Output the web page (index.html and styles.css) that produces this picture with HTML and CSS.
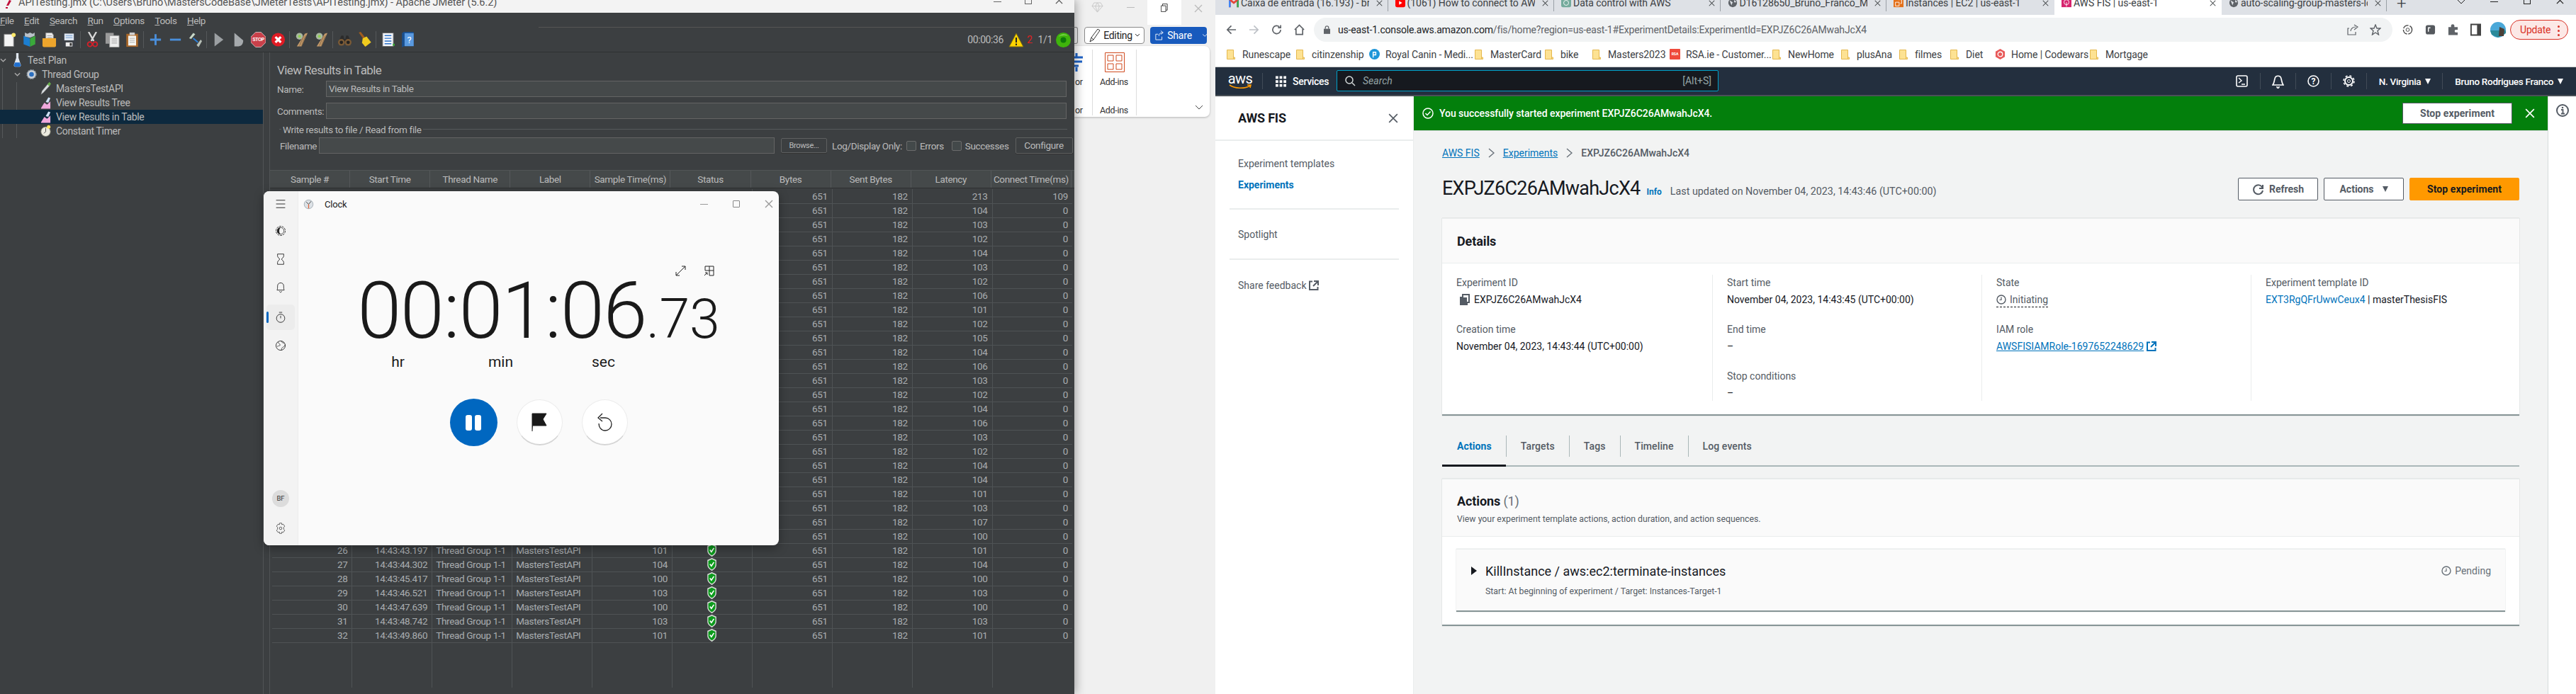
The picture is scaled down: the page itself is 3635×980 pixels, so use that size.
FILE: index.html
```html
<!DOCTYPE html>
<html lang="en">

<head>
    <meta charset="UTF-8">
    <title>Desktop</title>
    <link rel="stylesheet" href="styles.css">
</head>

<body>
    <svg class="sprite">
        <symbol id="shield" viewBox="0 0 14 20">
            <path d="M7 0 14 3V11C14 15 10 18 7 20 4 18 0 15 0 11V3Z" fill="#d8dcd8" />
            <path d="M7 2 12.500 4.500V11C12.500 14 9.500 16.500 7 18 4.500 16.500 1.500 14 1.500 11V4.500Z" fill="#0c9a1c" />
            <path d="M4 9.500 6.300 12.500 10.200 6.500" fill="none" stroke="#fff" stroke-width="1.800" />
        </symbol>
        <symbol id="folder" viewBox="0 0 12 14">
            <path d="M.5.500H9.500V13.500H.5Z" fill="#fde293" stroke="#e5b84f" />
            <path d="M9.500 11H11.500V13.500H9.500Z" fill="#fde293" stroke="#e5b84f" />
        </symbol>
        <symbol id="x" viewBox="0 0 12 12">
            <path d="M1 1 11 11M11 1 1 11" fill="none" stroke="currentColor" stroke-width="1.400" />
        </symbol>
        <symbol id="sweep" viewBox="0 0 22 22">
            <circle cx="8" cy="6" r="5" fill="#a9b8a0" />
            <circle cx="8" cy="6" r="2" fill="#8fd14f" />
            <path d="M20 1 11 21H4L16 2Z" fill="#c2996a" />
            <path d="M14 6 8 20M17 5 11 20" stroke="#8a6a45" />
        </symbol>
        <symbol id="ext" viewBox="0 0 14 14">
            <path d="M5 1.500H1V13H12.500V9M7 1H13V7M13 1 6 8" fill="none" stroke="currentColor" stroke-width="2" />
        </symbol>
        <symbol id="clockface" viewBox="0 0 14 14">
            <circle cx="7" cy="7" r="6" fill="none" stroke="currentColor" stroke-width="1.400" />
            <path d="M7 3.500V7.500H4.500" fill="none" stroke="currentColor" stroke-width="1.200" />
        </symbol>
    </svg>

    <!-- office window behind -->
    <div class="word">
        <div class="word-title">
            <svg class="w-gem" viewBox="0 0 18 16"><path d="M4 1H14L17 6 9 15 1 6ZM1 6H17M6 6 9 15 12 6 9 1 6 6" fill="none" stroke="#c8c8c8" /></svg>
            <span class="w-min"></span>
            <div class="w-restore"><svg viewBox="0 0 12 14" width="10" height="12"><path d="M.5 3.500H8.500V13.500H.5ZM3 3.500V.5H11V11H8.500" fill="none" stroke="#222" /></svg></div>
            <svg class="w-close" width="12" height="14"><use href="#x" /></svg>
        </div>
        <div class="word-btns">
            <span class="w-stub"></span>
            <div class="w-edit">
                <svg width="16" height="20" viewBox="0 0 16 20"><path d="M1 19 3 13 12 1 15 3 6 16ZM3 13 6 16" fill="none" stroke="#333" /></svg>
                Editing
                <svg width="6" height="4" viewBox="0 0 6 4"><path d="M0 0 3 3 6 0" fill="none" stroke="#333" /></svg>
            </div>
            <div class="w-share">
                <svg width="14" height="16" viewBox="0 0 14 16"><path d="M1 6H5M1 6V15H11V10M6 9C6 5 9 3.500 12 3.500M9 .5 13 3.500 9 6.500" fill="none" stroke="#fff" /></svg>
                <span class="w-share-txt">Share</span>
                <svg width="7" height="4" viewBox="0 0 7 4"><path d="M0 0 3.500 3.500 7 0" fill="none" stroke="#fff" /></svg>
            </div>
        </div>
        <div class="ribbon">
            <div class="r-stub">
                <svg width="12" height="26" viewBox="0 0 12 26"><path d="M0 6H12M0 12H11M0 18H6M3 0V5M3 20V26" stroke="#1d63c8" stroke-width="3" /></svg>
                <span class="r-label">or</span>
                <span class="r-label r-bottom">or</span>
            </div>
            <div class="r-addins">
                <svg width="28" height="28" viewBox="0 0 28 28">
                    <path d="M.5.5H27.500V27.500H.5Z" fill="#fff" stroke="#d04a1e" />
                    <path d="M4 4H12V12H4ZM16 4H24V12H16ZM4 16H12V24H4ZM16 16H24V24H16Z" fill="#fff" stroke="#d04a1e" />
                </svg>
                <span class="r-label">Add-ins</span>
                <span class="r-label r-bottom">Add-ins</span>
            </div>
            <svg class="r-chev" width="10" height="6" viewBox="0 0 10 6"><path d="M0 0 5 5 10 0" fill="none" stroke="#444" /></svg>
        </div>
    </div>

    <!-- jmeter -->
    <div class="jm">
        <div class="jm-title">
            <svg width="8" height="12" viewBox="0 0 8 12"><path d="M5 0 8 1 4 8H1ZM0 10H3V12H0Z" fill="#c0103a" /></svg>
            <span class="jm-title-txt">APITesting.jmx (C:\Users\Bruno\MastersCodeBase\JMeterTests\APITesting.jmx) - Apache JMeter (5.6.2)</span>
            <div class="jm-ctrl">
                <span class="jm-min"></span>
                <span class="jm-max"></span>
                <svg width="11" height="11"><use href="#x" /></svg>
            </div>
        </div>
        <div class="jm-menu">
            <span><u>F</u>ile</span>
            <span><u>E</u>dit</span>
            <span><u>S</u>earch</span>
            <span><u>R</u>un</span>
            <span><u>O</u>ptions</span>
            <span><u>T</u>ools</span>
            <span><u>H</u>elp</span>
            <div class="jm-menu-fill"></div>
        </div>
        <div class="jm-tools">
            <div class="ti"><svg viewBox="0 0 22 22"><path d="M3 3H17V21H3Z" fill="#f4f4f4" stroke="#888" /><circle cx="17" cy="4" r="3" fill="#ffe96a" /></svg></div>
            <div class="ti"><svg viewBox="0 0 22 24"><path d="M2 6 12 10V23L2 19Z" fill="#1c7ed0" /><path d="M12 10 20 6V19L12 23Z" fill="#3aa83a" /><path d="M4 7V1L8 3 12 1 16 3 19 1V6L12 9Z" fill="#b9c1c8" /></svg></div>
            <div class="ti"><svg viewBox="0 0 22 22"><path d="M6 1H15L17 4V12H6Z" fill="#eee" stroke="#999" /><path d="M8 5H15M8 8H15" stroke="#999" /><path d="M1 9H21V20C21 21 20 22 19 22H3C2 22 1 21 1 20Z" fill="#eda52c" /></svg></div>
            <div class="ti"><svg viewBox="0 0 22 22"><path d="M1 1H21V22H1Z" fill="#3b3f45" /><path d="M4 2H18V12H4Z" fill="#dfe7f2" /><path d="M6 5H16M6 8H16" stroke="#6d9ad0" /><path d="M6 15H16V21H6Z" fill="#eee" /><path d="M12 16H15V20H12Z" fill="#333" /></svg></div>
            <span class="tsep"></span>
            <div class="ti"><svg viewBox="0 0 22 24"><path d="M5 0 13 14M17 0 9 14" stroke="#d8d8d8" stroke-width="2.500" /><circle cx="7" cy="19" r="3.500" fill="none" stroke="#d4202a" stroke-width="2" /><circle cx="15" cy="19" r="3.500" fill="none" stroke="#d4202a" stroke-width="2" /></svg></div>
            <div class="ti"><svg viewBox="0 0 22 22"><path d="M1 1H13V17H1Z" fill="#9a9a9a" /><path d="M7 5H21V22H7Z" fill="#ececec" stroke="#999" /><path d="M10 10H18M10 13H18M10 16H18" stroke="#999" /></svg></div>
            <div class="ti"><svg viewBox="0 0 22 24"><path d="M2 3H20V23H2Z" fill="#a9682a" /><path d="M5 6H17V21H5Z" fill="#f4f4f0" /><path d="M7 1H15V5H7Z" fill="#cfcfcf" /><path d="M7 10H15M7 13H15M7 16H15" stroke="#aaa" /></svg></div>
            <span class="tsep"></span>
            <div class="ti"><svg viewBox="0 0 22 22"><path d="M11 3V19M3 11H19" stroke="#4a8fdc" stroke-width="3" /></svg></div>
            <div class="ti"><svg viewBox="0 0 22 22"><path d="M3 11H19" stroke="#4a8fdc" stroke-width="3" /></svg></div>
            <div class="ti"><svg viewBox="0 0 22 22"><path d="M2 9 8 1 11 3 5 10Z" fill="#c8d8c8" /><path d="M16 22 21 13 19 11 13 19Z" fill="#b8c0b8" /><path d="M8 9 15 15" stroke="#2a7fd8" stroke-width="2" /></svg></div>
            <span class="tsep"></span>
            <div class="ti"><svg viewBox="0 0 22 22"><path d="M5 1 18 11 5 21Z" fill="#9b9fa2" /></svg></div>
            <div class="ti"><svg viewBox="0 0 22 22"><path d="M5 1 18 12C18 18 15 21 9 21H5Z" fill="#a6aaad" /></svg></div>
            <div class="ti"><svg viewBox="0 0 22 22"><path d="M7 0H15L22 7V15L15 22H7L0 15V7Z" fill="#c9404a" stroke="#eee" stroke-width=".7" /><text x="11" y="13.500" text-anchor="middle" class="stop-word">STOP</text></svg></div>
            <div class="ti"><svg viewBox="0 0 22 22"><circle cx="11" cy="11" r="10" fill="#e01b24" /><path d="M7 7 15 15M15 7 7 15" stroke="#fff" stroke-width="3.500" /></svg></div>
            <span class="tsep"></span>
            <div class="ti"><svg viewBox="0 0 22 22"><use href="#sweep" /></svg></div>
            <div class="ti"><svg viewBox="0 0 22 22"><use href="#sweep" /></svg></div>
            <span class="tsep"></span>
            <div class="ti"><svg viewBox="0 0 22 22"><path d="M2 14 6 5H9L10 10H12L13 5H16L20 14Z" fill="#2b2b2b" /><circle cx="6" cy="15" r="5" fill="#7a5a36" /><circle cx="16" cy="15" r="5" fill="#7a5a36" /><circle cx="6" cy="15" r="2.500" fill="#222" /><circle cx="16" cy="15" r="2.500" fill="#222" /></svg></div>
            <div class="ti"><svg viewBox="0 0 22 24"><path d="M2 1 5 0 12 9 9 11Z" fill="#a15c1e" /><path d="M8 10 14 7 21 16 12 23 7 17Z" fill="#f0cb1e" /></svg></div>
            <span class="tsep"></span>
            <div class="ti"><svg viewBox="0 0 22 22"><path d="M3 1H19V21H3Z" fill="#f4f6fa" stroke="#666" /><path d="M6 5H16M6 9H16M6 13H16M6 17H16" stroke="#2a70c8" stroke-width="1.500" /><path d="M18 17H21V20H18Z" fill="#3aa83a" /></svg></div>
            <div class="ti"><svg viewBox="0 0 22 24"><path d="M2 2 5 0H20V22H5L2 24Z" fill="#1a4f8e" /><path d="M6 2H20V22H6Z" fill="#5a9ae0" /><text x="13" y="17" text-anchor="middle" class="help-word">?</text></svg></div>

            <div class="jm-status">
                <span class="st-time">00:00:36</span>
                <svg width="22" height="21" viewBox="0 0 22 21"><path d="M11 1 21 20H1Z" fill="#ffd400" stroke="#7a6a12" /><path d="M11 7V14M11 15.500V18" stroke="#222" stroke-width="2" /></svg>
                <span class="st-err">2</span>
                <span class="st-count">1/1</span>
                <svg class="st-ball" width="21" height="21" viewBox="0 0 21 21"><circle cx="10.500" cy="10.500" r="10.500" fill="#3fb40c" /><circle cx="10.500" cy="10.500" r="4" fill="#0e7a0a" /><path d="M4 6C6 2 14 1 17 5 13 3 8 3 4 6Z" fill="#a6e57a" /></svg>
            </div>
        </div>

        <div class="jm-body">
            <div class="tree">
                <span class="tree-line l1"></span>
                <span class="tree-line l2"></span>
                <div class="tn n0">
                    <svg class="tw" viewBox="0 0 10 6"><path d="M1 1 5 5 9 1" fill="none" stroke="#aaa" stroke-width="1.500" /></svg>
                    <svg class="ni" viewBox="0 0 14 24"><path d="M5 0H9V8L13 20C13 22 12 23 11 23H3C2 23 1 22 1 20L5 8Z" fill="#dfe6ee" /><path d="M3 16H11L13 21 11 23H3L1 21Z" fill="#1f6fd0" /></svg>
                    Test Plan
                </div>
                <div class="tn n1">
                    <svg class="tw" viewBox="0 0 10 6"><path d="M1 1 5 5 9 1" fill="none" stroke="#aaa" stroke-width="1.500" /></svg>
                    <svg class="ni" viewBox="0 0 18 18"><circle cx="9" cy="9" r="7.500" fill="#ccd2d8" stroke="#8f9aa5" stroke-width="2" stroke-dasharray="2.500 1.500" /><circle cx="9" cy="9" r="4" fill="#2b6fc0" /></svg>
                    Thread Group
                </div>
                <div class="tn n2">
                    <svg class="ni" viewBox="0 0 18 22"><path d="M1 21 3 15 13 3 16 6 5 18Z" fill="#d8dde0" stroke="#888" stroke-width=".5" /><path d="M12 4 15 0 18 3 15 7Z" fill="#6ab04c" /></svg>
                    MastersTestAPI
                </div>
                <div class="tn n2">
                    <svg class="ni" viewBox="0 0 16 20"><path d="M1 18 6 10 10 13 15 8V19H1Z" fill="#f0a8dc" /><path d="M8 9 12 2 15 3 12 10Z" fill="#cfe0f4" /></svg>
                    View Results Tree
                </div>
                <div class="tn n2 sel">
                    <svg class="ni" viewBox="0 0 16 20"><path d="M1 18 6 10 10 13 15 8V19H1Z" fill="#f0a8dc" /><path d="M8 9 12 2 15 3 12 10Z" fill="#cfe0f4" /></svg>
                    View Results in Table
                </div>
                <div class="tn n2">
                    <svg class="ni" viewBox="0 0 18 22"><circle cx="9" cy="12" r="8" fill="#ecebe0" stroke="#8a8a7a" /><path d="M9 6V12L6 15" fill="none" stroke="#333" /><circle cx="14" cy="4" r="3" fill="#ffe45c" /></svg>
                    Constant Timer
                </div>
            </div>
            <div class="results">
                <h1 class="res-title">View Results in Table</h1>
                <div class="frow">
                    <span class="flabel">Name:</span>
                    <div class="field">View Results in Table</div>
                </div>
                <div class="frow">
                    <span class="flabel">Comments:</span>
                    <div class="field"></div>
                </div>
                <div class="legend"><span>Write results to file / Read from file</span></div>
                <div class="frow file-row">
                    <span class="flabel">Filename</span>
                    <div class="field file"></div>
                    <div class="btn browse">Browse...</div>
                    <span class="log">Log/Display Only:</span>
                    <span class="cb"></span><span class="cb-txt">Errors</span>
                    <span class="cb"></span><span class="cb-txt">Successes</span>
                    <div class="btn configure">Configure</div>
                </div>
                <div class="thead">
                    <span>Sample #</span>
                    <span>Start Time</span>
                    <span>Thread Name</span>
                    <span>Label</span>
                    <span>Sample Time(ms)</span>
                    <span>Status</span>
                    <span>Bytes</span>
                    <span>Sent Bytes</span>
                    <span>Latency</span>
                    <span>Connect Time(ms)</span>
                </div>
                <table class="rows">
                    <colgroup>
                        <col><col><col><col><col><col><col><col><col><col>
                    </colgroup>
                    <tr><td colspan="6"></td><td>651</td><td>182</td><td>213</td><td>109</td></tr>
                    <tr><td colspan="6"></td><td>651</td><td>182</td><td>104</td><td>0</td></tr>
                    <tr><td colspan="6"></td><td>651</td><td>182</td><td>103</td><td>0</td></tr>
                    <tr><td colspan="6"></td><td>651</td><td>182</td><td>102</td><td>0</td></tr>
                    <tr><td colspan="6"></td><td>651</td><td>182</td><td>104</td><td>0</td></tr>
                    <tr><td colspan="6"></td><td>651</td><td>182</td><td>103</td><td>0</td></tr>
                    <tr><td colspan="6"></td><td>651</td><td>182</td><td>102</td><td>0</td></tr>
                    <tr><td colspan="6"></td><td>651</td><td>182</td><td>106</td><td>0</td></tr>
                    <tr><td colspan="6"></td><td>651</td><td>182</td><td>101</td><td>0</td></tr>
                    <tr><td colspan="6"></td><td>651</td><td>182</td><td>102</td><td>0</td></tr>
                    <tr><td colspan="6"></td><td>651</td><td>182</td><td>105</td><td>0</td></tr>
                    <tr><td colspan="6"></td><td>651</td><td>182</td><td>104</td><td>0</td></tr>
                    <tr><td colspan="6"></td><td>651</td><td>182</td><td>106</td><td>0</td></tr>
                    <tr><td colspan="6"></td><td>651</td><td>182</td><td>103</td><td>0</td></tr>
                    <tr><td colspan="6"></td><td>651</td><td>182</td><td>102</td><td>0</td></tr>
                    <tr><td colspan="6"></td><td>651</td><td>182</td><td>104</td><td>0</td></tr>
                    <tr><td colspan="6"></td><td>651</td><td>182</td><td>106</td><td>0</td></tr>
                    <tr><td colspan="6"></td><td>651</td><td>182</td><td>103</td><td>0</td></tr>
                    <tr><td colspan="6"></td><td>651</td><td>182</td><td>102</td><td>0</td></tr>
                    <tr><td colspan="6"></td><td>651</td><td>182</td><td>104</td><td>0</td></tr>
                    <tr><td colspan="6"></td><td>651</td><td>182</td><td>104</td><td>0</td></tr>
                    <tr><td colspan="6"></td><td>651</td><td>182</td><td>101</td><td>0</td></tr>
                    <tr><td colspan="6"></td><td>651</td><td>182</td><td>103</td><td>0</td></tr>
                    <tr><td colspan="6"></td><td>651</td><td>182</td><td>107</td><td>0</td></tr>
                    <tr><td colspan="6"></td><td>651</td><td>182</td><td>100</td><td>0</td></tr>
                    <tr><td>26</td><td>14:43:43.197</td><td class="tl">Thread Group 1-1</td><td class="tl">MastersTestAPI</td><td>101</td><td class="tc"><svg class="shield"><use href="#shield" /></svg></td><td>651</td><td>182</td><td>101</td><td>0</td></tr>
                    <tr><td>27</td><td>14:43:44.302</td><td class="tl">Thread Group 1-1</td><td class="tl">MastersTestAPI</td><td>104</td><td class="tc"><svg class="shield"><use href="#shield" /></svg></td><td>651</td><td>182</td><td>104</td><td>0</td></tr>
                    <tr><td>28</td><td>14:43:45.417</td><td class="tl">Thread Group 1-1</td><td class="tl">MastersTestAPI</td><td>100</td><td class="tc"><svg class="shield"><use href="#shield" /></svg></td><td>651</td><td>182</td><td>100</td><td>0</td></tr>
                    <tr><td>29</td><td>14:43:46.521</td><td class="tl">Thread Group 1-1</td><td class="tl">MastersTestAPI</td><td>103</td><td class="tc"><svg class="shield"><use href="#shield" /></svg></td><td>651</td><td>182</td><td>103</td><td>0</td></tr>
                    <tr><td>30</td><td>14:43:47.639</td><td class="tl">Thread Group 1-1</td><td class="tl">MastersTestAPI</td><td>100</td><td class="tc"><svg class="shield"><use href="#shield" /></svg></td><td>651</td><td>182</td><td>100</td><td>0</td></tr>
                    <tr><td>31</td><td>14:43:48.742</td><td class="tl">Thread Group 1-1</td><td class="tl">MastersTestAPI</td><td>103</td><td class="tc"><svg class="shield"><use href="#shield" /></svg></td><td>651</td><td>182</td><td>103</td><td>0</td></tr>
                    <tr><td>32</td><td>14:43:49.860</td><td class="tl">Thread Group 1-1</td><td class="tl">MastersTestAPI</td><td>101</td><td class="tc"><svg class="shield"><use href="#shield" /></svg></td><td>651</td><td>182</td><td>101</td><td>0</td></tr>
                    <tr class="filler"><td></td><td></td><td></td><td></td><td></td><td></td><td></td><td></td><td></td><td></td></tr>
                </table>
            </div>
        </div>
    </div>

    <!-- clock app -->
    <div class="clock">
        <div class="c-side">
            <svg class="ci" viewBox="0 0 20 16"><path d="M2 1.500H18M2 8H18M2 14.500H18" stroke="#333" stroke-width="1.300" /></svg>
            <svg class="ci c1" viewBox="0 0 20 22"><circle cx="10" cy="11" r="9" fill="none" stroke="#222" stroke-width="1.200" stroke-dasharray="4 1.500" /><path d="M10 4A7 7 0 0 0 10 18 10 10 0 0 1 10 4Z" fill="#222" /><circle cx="10" cy="11" r="6.500" fill="none" stroke="#222" /></svg>
            <svg class="ci c2" viewBox="0 0 20 22"><path d="M4 1H16V5C16 8 12 9 12 11 12 13 16 14 16 17V21H4V17C4 14 8 13 8 11 8 9 4 8 4 5Z" fill="none" stroke="#222" stroke-width="1.200" /></svg>
            <svg class="ci c3" viewBox="0 0 20 22"><path d="M3 16C4 14 4 12 4 8 4 4 7 2 10 2 13 2 16 4 16 8 16 12 16 14 17 16ZM8 18C8 21 12 21 12 18" fill="none" stroke="#222" stroke-width="1.200" /></svg>
            <div class="c-active">
                <span class="c-bar"></span>
                <svg class="ci" viewBox="0 0 20 22"><circle cx="10" cy="13" r="8" fill="none" stroke="#222" stroke-width="1.200" /><path d="M7 1.500H13M10 8V13" stroke="#222" stroke-width="1.200" /></svg>
            </div>
            <svg class="ci c5" viewBox="0 0 20 22"><circle cx="10" cy="11" r="9" fill="none" stroke="#222" stroke-width="1.200" /><path d="M5 4C6 8 9 7 9 10 9 12 5 11 3 13M12 20C11 16 13 15 15 14 17 13 18 11 18.500 9M12 2.500C12 5 14 6 17 6" fill="none" stroke="#222" /></svg>
            <div class="c-spacer"></div>
            <div class="c-avatar">BF</div>
            <svg class="ci c-gear" viewBox="0 0 20 22"><path d="M8 1H12L12.500 4 15 3 18 7 16 9V13L18 15 15 19 12.500 18 12 21H8L7.500 18 5 19 2 15 4 13V9L2 7 5 3 7.500 4Z" fill="none" stroke="#333" /><circle cx="10" cy="11" r="2.500" fill="none" stroke="#333" /></svg>
        </div>
        <div class="c-main">
            <div class="c-title">
                <svg class="c-appicon" viewBox="0 0 16 18"><circle cx="8" cy="9" r="7.500" fill="#dde2e6" stroke="#9aa5ad" /><path d="M8 9 4 5M8 9 12 4" stroke="#333" /><path d="M8 9V16" stroke="#e0633a" stroke-width="1.500" /></svg>
                <span class="c-name">Clock</span>
                <div class="c-ctrl">
                    <span class="c-min"></span>
                    <span class="c-max"></span>
                    <svg width="12" height="12" class="c-x"><use href="#x" /></svg>
                </div>
            </div>
            <div class="c-tools">
                <svg width="15" height="15" viewBox="0 0 15 15"><path d="M1 9V14H6M9 1H14V6M14 1 1 14" fill="none" stroke="#222" /></svg>
                <svg width="15" height="15" viewBox="0 0 15 15"><path d="M2 1H14V14H8V7H2ZM8 1V7H14M1 14 5 10M2 10H5V13" fill="none" stroke="#222" /></svg>
            </div>
            <div class="c-time">00:01:06<span class="c-frac">.73</span></div>
            <div class="c-units"><span>hr</span><span>min</span><span>sec</span></div>
            <div class="c-btns">
                <div class="c-pause"><span></span><span></span></div>
                <div class="c-round">
                    <svg width="22" height="26" viewBox="0 0 22 26"><path d="M1 26V1H21L16 9 21 18H2" fill="#1a1a1a" stroke="#1a1a1a" /></svg>
                </div>
                <div class="c-round">
                    <svg width="24" height="26" viewBox="0 0 24 26"><path d="M6 7H13C18 7 22 11 22 16 22 21 18 25 13 25 7 25 4 20 4 15M9 1 3 7 9 12" fill="none" stroke="#222" stroke-width="1.300" /></svg>
                </div>
            </div>
        </div>
    </div>

    <!-- browser -->
    <div class="chrome">
        <div class="tabs">
            <div class="tab">
                <svg class="fav" viewBox="0 0 16 14"><path d="M0 2 2 0 8 5 14 0 16 2V14H13V5L8 9 3 5V14H0Z" fill="#e6463a" /><path d="M13 14V5L16 2V14Z" fill="#34a853" /><path d="M0 14V2L3 5V14Z" fill="#4285f4" /></svg>
                <span class="tab-t">Caixa de entrada (16.193) - bruno</span>
                <svg class="tab-x"><use href="#x" /></svg>
            </div>
            <div class="tab">
                <svg class="fav" viewBox="0 0 16 14"><rect width="16" height="14" rx="3" fill="#f00" /><path d="M6 4 11 7 6 10Z" fill="#fff" /></svg>
                <span class="tab-t">(1061) How to connect to AWS RDS</span>
                <svg class="tab-x"><use href="#x" /></svg>
            </div>
            <div class="tab">
                <svg class="fav" viewBox="0 0 16 14"><rect width="16" height="14" rx="3" fill="#74aa9c" /><circle cx="8" cy="7" r="4" fill="none" stroke="#fff" /></svg>
                <span class="tab-t">Data control with AWS</span>
                <svg class="tab-x"><use href="#x" /></svg>
            </div>
            <div class="tab">
                <svg class="fav" viewBox="0 0 16 14"><circle cx="8" cy="7" r="7" fill="#5f6368" /><path d="M3 3 8 6 6 11ZM11 2 14 6 10 6Z" fill="#dee1e6" /></svg>
                <span class="tab-t">D16128650_Bruno_Franco_MSc_Thesis</span>
                <svg class="tab-x"><use href="#x" /></svg>
            </div>
            <div class="tab tab-last">
                <svg class="fav" viewBox="0 0 16 14"><rect width="16" height="14" fill="#e4701a" /><path d="M3 6H9V12H3ZM7 2H13V8H11" fill="none" stroke="#fff" /></svg>
                <span class="tab-t">Instances | EC2 | us-east-1</span>
                <svg class="tab-x"><use href="#x" /></svg>
            </div>
            <div class="tab tab-on">
                <svg class="fav" viewBox="0 0 16 14"><rect width="16" height="14" fill="#d6246e" /><circle cx="8" cy="6" r="4" fill="none" stroke="#fff" /><path d="M8 6V13" stroke="#fff" /></svg>
                <span class="tab-t">AWS FIS | us-east-1</span>
                <svg class="tab-x"><use href="#x" /></svg>
            </div>
            <div class="tab tab-after">
                <svg class="fav" viewBox="0 0 16 14"><circle cx="8" cy="7" r="7" fill="#5f6368" /><path d="M3 3 8 6 6 11ZM11 2 14 6 10 6Z" fill="#dee1e6" /></svg>
                <span class="tab-t">auto-scaling-group-masters-load</span>
                <svg class="tab-x"><use href="#x" /></svg>
            </div>
            <span class="tab-plus">+</span>
            <div class="win-ctrl">
                <svg width="10" height="6" viewBox="0 0 10 6"><path d="M0 0 5 5 10 0" fill="none" stroke="#222" /></svg>
                <span class="win-min"></span>
                <span class="win-max"></span>
                <svg width="11" height="11" class="win-x"><use href="#x" /></svg>
            </div>
        </div>
        <div class="toolbar">
            <svg class="nav-i" viewBox="0 0 16 16"><path d="M15 8H2M8 2 2 8 8 14" fill="none" stroke="#5f6368" stroke-width="1.800" /></svg>
            <svg class="nav-i" viewBox="0 0 16 16"><path d="M1 8H14M8 2 14 8 8 14" fill="none" stroke="#bdc1c6" stroke-width="1.800" /></svg>
            <svg class="nav-i" viewBox="0 0 16 16"><path d="M14 8A6 6 0 1 1 12 3.500M14 1V5H10" fill="none" stroke="#5f6368" stroke-width="1.800" /></svg>
            <svg class="nav-i" viewBox="0 0 16 16"><path d="M1 8 8 1 15 8M3 7V15H13V7" fill="none" stroke="#5f6368" stroke-width="1.800" /></svg>
            <div class="omni">
                <svg class="lock" viewBox="0 0 10 13"><path d="M0 5H10V13H0Z" fill="#5f6368" /><path d="M2.500 5V3C2.500 0 7.500 0 7.500 3V5" fill="none" stroke="#5f6368" stroke-width="1.400" /></svg>
                <span class="url"><b>us-east-1.console.aws.amazon.com</b>/fis/home?region=us-east-1#ExperimentDetails:ExperimentId=EXPJZ6C26AMwahJcX4</span>
                <svg class="om-i" viewBox="0 0 16 16"><path d="M3 6H1V15H12V11M5 10C5 6 9 4 12 4M10 1 15 4 10 8" fill="none" stroke="#5f6368" stroke-width="1.200" /></svg>
                <svg class="om-i" viewBox="0 0 16 16"><path d="M8 1 10 6H15L11 9.500 12.500 15 8 12 3.500 15 5 9.500 1 6H6Z" fill="none" stroke="#5f6368" stroke-width="1.400" /></svg>
            </div>
            <svg class="ext-i" viewBox="0 0 16 18"><circle cx="8" cy="9" r="6.500" fill="none" stroke="#444" stroke-width="1.500" stroke-dasharray="9 2" /><circle cx="8" cy="9" r="2.500" fill="none" stroke="#444" /></svg>
            <svg class="ext-i" viewBox="0 0 16 18"><rect x="1" y="2" width="14" height="14" rx="3" fill="#55595e" /><path d="M5 12V6H8" fill="none" stroke="#fff" stroke-width="1.500" /></svg>
            <svg class="ext-i" viewBox="0 0 16 18"><path d="M1 5H5V3C5 0 10 0 10 3V5H15V9H12C10 9 10 13 12 13H15V17H1Z" fill="#5f6368" /></svg>
            <svg class="ext-i" viewBox="0 0 16 18"><path d="M1 1H15V17H1Z" fill="none" stroke="#444" stroke-width="2" /><path d="M10 1H15V17H10Z" fill="#444" /></svg>
            <svg class="avatar" viewBox="0 0 22 22"><circle cx="11" cy="11" r="11" fill="#4aa8d8" /><path d="M0 12H22V16L11 22 2 18Z" fill="#2a8a9a" /><path d="M13 7 20 10 19 20 12 20Z" fill="#4a4038" /></svg>
            <div class="update">Update<span class="dots"><i></i><i></i><i></i></span></div>
        </div>
        <div class="marks">
            <span class="bm b1"><svg class="fd"><use href="#folder" /></svg>Runescape</span>
            <span class="bm b2"><svg class="fd"><use href="#folder" /></svg>citinzenship</span>
            <span class="bm b3"><svg class="bmi" viewBox="0 0 16 16"><circle cx="8" cy="8" r="8" fill="#1f96d8" /><path d="M6 13V5H10V9H6" fill="none" stroke="#fff" stroke-width="1.500" /></svg>Royal Canin - Medi...</span>
            <span class="bm b4"><svg class="fd"><use href="#folder" /></svg>MasterCard</span>
            <span class="bm b5"><svg class="fd"><use href="#folder" /></svg>bike</span>
            <span class="bm b6"><svg class="fd"><use href="#folder" /></svg>Masters2023</span>
            <span class="bm b7"><svg class="bmi" viewBox="0 0 16 16"><rect width="16" height="16" rx="1" fill="#ef4a3c" /><text x="8" y="10" text-anchor="middle" class="rsa-word">RSA</text></svg>RSA.ie - Customer...</span>
            <span class="bm b8"><svg class="fd"><use href="#folder" /></svg>NewHome</span>
            <span class="bm b9"><svg class="fd"><use href="#folder" /></svg>plusAna</span>
            <span class="bm b10"><svg class="fd"><use href="#folder" /></svg>filmes</span>
            <span class="bm b11"><svg class="fd"><use href="#folder" /></svg>Diet</span>
            <span class="bm b12"><svg class="bmi" viewBox="0 0 16 16"><path d="M8 0 15 4V12L8 16 1 12V4Z" fill="#e85a5a" /><circle cx="8" cy="8" r="3.500" fill="none" stroke="#fff" stroke-width="1.400" /></svg>Home | Codewars</span>
            <span class="bm b13"><svg class="fd"><use href="#folder" /></svg>Mortgage</span>
        </div>

        <div class="awsnav">
            <div class="aws-logo">aws<svg width="32" height="7" viewBox="0 0 32 7"><path d="M1 1C8 6 22 7 30 2M26 1 31 1 30 5" fill="none" stroke="#ff9900" stroke-width="1.600" /></svg></div>
            <span class="an-sep"></span>
            <svg class="grid9" viewBox="0 0 16 16"><path d="M0 0H4V4H0ZM6 0H10V4H6ZM12 0H16V4H12ZM0 6H4V10H0ZM6 6H10V10H6ZM12 6H16V10H12ZM0 12H4V16H0ZM6 12H10V16H6ZM12 12H16V16H12Z" fill="#fff" /></svg>
            <span class="services">Services</span>
            <div class="searchbox">
                <svg width="15" height="15" viewBox="0 0 15 15"><circle cx="6" cy="6" r="5" fill="none" stroke="#d5dbdb" stroke-width="1.500" /><path d="M10 10 14 14" stroke="#d5dbdb" stroke-width="1.500" /></svg>
                <span class="search-ph">Search</span>
                <span class="search-key">[Alt+S]</span>
            </div>
            <div class="an-right">
                <span class="an-item">
                    <svg width="17" height="17" viewBox="0 0 17 17"><rect x="1" y="1" width="15" height="15" rx="2" fill="none" stroke="#fff" stroke-width="1.600" /><path d="M4 4 8 8 4 11M8 13H13" fill="none" stroke="#fff" stroke-width="1.400" /></svg>
                </span>
                <span class="an-item">
                    <svg width="17" height="20" viewBox="0 0 17 20"><path d="M1 15C3 13 3 10 4 6 5 1 12 1 13 6 14 10 14 13 16 15ZM7 17C7 20 10 20 10 17" fill="none" stroke="#fff" stroke-width="1.700" /></svg>
                </span>
                <span class="an-item">
                    <svg width="17" height="17" viewBox="0 0 17 17"><circle cx="8.500" cy="8.500" r="7.500" fill="none" stroke="#fff" stroke-width="1.600" /><text x="8.500" y="12.500" text-anchor="middle" class="q-word">?</text></svg>
                </span>
                <span class="an-item">
                    <svg width="17" height="17" viewBox="0 0 17 17"><circle cx="8.500" cy="8.500" r="5.500" fill="none" stroke="#fff" stroke-width="2" /><circle cx="8.500" cy="8.500" r="7.500" fill="none" stroke="#fff" stroke-width="1.500" stroke-dasharray="3 3" /><circle cx="8.500" cy="8.500" r="2" fill="none" stroke="#fff" /></svg>
                </span>
                <span class="an-item an-txt">N. Virginia<i class="caret"></i></span>
                <span class="an-item an-txt">Bruno Rodrigues Franco<i class="caret"></i></span>
            </div>
        </div>

        <div class="console">
            <div class="side">
                <div class="side-head">
                    <span class="side-title">AWS FIS</span>
                    <svg width="14" height="14" class="side-x"><use href="#x" /></svg>
                </div>
                <div class="side-sec s-a">
                    <a class="side-link">Experiment templates</a>
                    <a class="side-link on">Experiments</a>
                </div>
                <div class="side-sec s-b"><a class="side-link">Spotlight</a></div>
                <div class="side-sec s-c"><a class="side-link">Share feedback <svg width="14" height="14" class="ico"><use href="#ext" /></svg></a></div>
            </div>

            <div class="main">
                <div class="flash">
                    <svg width="16" height="16" viewBox="0 0 16 16"><circle cx="8" cy="8" r="7" fill="none" stroke="#fff" stroke-width="1.500" /><path d="M4.500 8 7 10.500 11.500 5.500" fill="none" stroke="#fff" stroke-width="1.500" /></svg>
                    <span class="flash-txt">You successfully started experiment EXPJZ6C26AMwahJcX4.</span>
                    <div class="flash-btn">Stop experiment</div>
                    <svg width="14" height="14" class="flash-x"><use href="#x" /></svg>
                </div>
                <div class="content">
                    <div class="crumbs">
                        <a>AWS FIS</a>
                        <svg width="9" height="14" viewBox="0 0 9 14"><path d="M1 1 8 7 1 13" fill="none" stroke="#687078" stroke-width="1.400" /></svg>
                        <a>Experiments</a>
                        <svg width="9" height="14" viewBox="0 0 9 14"><path d="M1 1 8 7 1 13" fill="none" stroke="#687078" stroke-width="1.400" /></svg>
                        <span>EXPJZ6C26AMwahJcX4</span>
                    </div>
                    <div class="pagehead">
                        <h1>EXPJZ6C26AMwahJcX4</h1>
                        <span class="info">Info</span>
                        <span class="updated">Last updated on November 04, 2023, 14:43:46 (UTC+00:00)</span>
                        <div class="acts">
                            <div class="abtn refresh">
                                <svg width="18" height="18" viewBox="0 0 18 18"><path d="M15 3V8H10M14.500 7A6.500 6.500 0 1 0 15 11" fill="none" stroke="#545b64" stroke-width="2" /></svg>
                                Refresh
                            </div>
                            <div class="abtn actions">Actions<i class="caret dark"></i></div>
                            <div class="abtn stop">Stop experiment</div>
                        </div>
                    </div>

                    <div class="card details">
                        <div class="card-head"><h2>Details</h2></div>
                        <div class="dgrid">
                            <div class="dcol">
                                <div class="dt">Experiment ID</div>
                                <div class="dd"><svg class="copy" viewBox="0 0 14 16"><path d="M4 1H13V12H10V15H1V5H4Z" fill="none" stroke="#545b64" stroke-width="2" /><path d="M1 5H10V15H1Z" fill="#545b64" /></svg>EXPJZ6C26AMwahJcX4</div>
                                <div class="dt">Creation time</div>
                                <div class="dd">November 04, 2023, 14:43:44 (UTC+00:00)</div>
                            </div>
                            <div class="dcol">
                                <div class="dt">Start time</div>
                                <div class="dd">November 04, 2023, 14:43:45 (UTC+00:00)</div>
                                <div class="dt">End time</div>
                                <div class="dd">–</div>
                                <div class="dt">Stop conditions</div>
                                <div class="dd">–</div>
                            </div>
                            <div class="dcol">
                                <div class="dt">State</div>
                                <div class="dd"><span class="state"><svg width="14" height="14" class="ico"><use href="#clockface" /></svg>Initiating</span></div>
                                <div class="dt">IAM role</div>
                                <div class="dd"><a class="lnk">AWSFISIAMRole-1697652248629</a> <svg width="14" height="14" class="ico blue"><use href="#ext" /></svg></div>
                            </div>
                            <div class="dcol">
                                <div class="dt">Experiment template ID</div>
                                <div class="dd"><span class="blue">EXT3RgQFrUwwCeux4</span> | masterThesisFIS</div>
                            </div>
                        </div>
                    </div>

                    <div class="ctabs">
                        <span class="ctab on">Actions</span>
                        <span class="ctab">Targets</span>
                        <span class="ctab">Tags</span>
                        <span class="ctab">Timeline</span>
                        <span class="ctab">Log events</span>
                    </div>

                    <div class="card acard">
                        <div class="card-head ahead">
                            <h2>Actions <span class="cnt">(1)</span></h2>
                            <p>View your experiment template actions, action duration, and action sequences.</p>
                        </div>
                        <div class="abody">
                            <div class="item">
                                <div class="item-top">
                                    <svg width="8" height="12" viewBox="0 0 8 12"><path d="M0 0 8 6 0 12Z" fill="#16191f" /></svg>
                                    <span class="item-name">KillInstance / aws:ec2:terminate-instances</span>
                                    <span class="pending"><svg width="14" height="14" class="ico"><use href="#clockface" /></svg>Pending</span>
                                </div>
                                <div class="item-sub">Start: At beginning of experiment / Target: Instances-Target-1</div>
                            </div>
                        </div>
                    </div>
                </div>
            </div>

            <div class="rail">
                <svg width="20" height="20" viewBox="0 0 20 20"><circle cx="10" cy="10" r="8" fill="none" stroke="#545b64" stroke-width="2" /><circle cx="10" cy="6" r="1.300" fill="#545b64" /><path d="M8 9H10.500V14M8 14.500H13" fill="none" stroke="#545b64" stroke-width="1.800" /></svg>
            </div>
        </div>
    </div>
</body>

</html>
```

FILE: styles.css
```css
* {
    margin: 0;
    padding: 0;
    box-sizing: border-box;
}

html,
body {
    width: 3635px;
    height: 980px;
    overflow: hidden;
}

body {
    position: relative;
    background: #f0f0f0;
    font-family: Roboto, "Liberation Sans", sans-serif;
}

.sprite {
    display: none;
}

/* ---------- word ---------- */
.word {
    position: absolute;
    left: 1516px;
    top: 0;
    width: 199px;
    height: 980px;
    background: #f0f0f0;
    overflow: hidden;
}

.word-title {
    height: 35px;
    position: relative;
    color: #bbb;
}

.w-gem {
    position: absolute;
    left: 24px;
    top: 3px;
    width: 17px;
    height: 15px;
}

.w-min {
    position: absolute;
    left: 74px;
    top: 10px;
    width: 11px;
    height: 1px;
    background: #bbb;
}

.w-restore {
    position: absolute;
    left: 103px;
    top: 0;
    width: 48px;
    height: 35px;
    background: #fff;
    display: flex;
    align-items: flex-start;
    justify-content: center;
    padding-top: 5px;
}

.w-close {
    position: absolute;
    left: 169px;
    top: 5px;
}

.word-btns {
    display: flex;
    height: 30px;
    padding-top: 3px;
}

.w-stub {
    width: 5px;
    height: 24px;
    border: 1px solid #888;
    border-left: 0;
    border-radius: 0 3px 3px 0;
    margin-right: 9px;
}

.w-edit {
    width: 85px;
    height: 24px;
    border: 1px solid #8a8a8a;
    border-radius: 4px;
    background: #fff;
    display: flex;
    align-items: center;
    justify-content: center;
    gap: 4px;
    font-size: 14px;
    letter-spacing: -.3px;
    color: #222;
}

.w-share {
    width: 80px;
    height: 24px;
    margin-left: 8px;
    border-radius: 4px;
    background: #185abd;
    color: #fff;
    display: flex;
    align-items: center;
    gap: 5px;
    padding-left: 7px;
    font-size: 14px;
    letter-spacing: -.2px;
}

.w-share-txt {
    margin-right: 10px;
}

.ribbon {
    position: relative;
    width: 191px;
    height: 100px;
    background: #fff;
    border-radius: 0 7px 7px 0;
    box-shadow: 0 1px 3px rgba(0, 0, 0, .25);
}

.r-label {
    position: absolute;
    top: 42px;
    font-size: 12.5px;
    letter-spacing: -.3px;
    color: #333;
}

.r-bottom {
    top: 82px;
}

.r-stub {
    position: absolute;
    left: 0;
    top: 0;
    width: 26px;
    height: 93px;
    border-right: 1px solid #ddd;
    margin-top: 5px;
}

.r-stub svg {
    margin-top: 5px;
}

.r-stub .r-label {
    left: 1px;
    top: 38px;
}

.r-stub .r-bottom {
    top: 78px;
}

.r-addins {
    position: absolute;
    left: 26px;
    top: 5px;
    width: 62px;
    height: 93px;
    border-right: 1px solid #ddd;
    text-align: center;
}

.r-addins svg {
    margin-top: 4px;
}

.r-addins .r-label {
    left: 10px;
    top: 38px;
}

.r-addins .r-bottom {
    top: 78px;
}

.r-chev {
    position: absolute;
    left: 171px;
    top: 84px;
}

/* ---------- jmeter ---------- */
.jm {
    position: absolute;
    left: 0;
    top: 0;
    width: 1516px;
    height: 980px;
    background: #3c3f41;
    color: #bbb;
    font-size: 13px;
    letter-spacing: -.35px;
    box-shadow: 3px 0 12px rgba(0, 0, 0, .3);
    overflow: hidden;
}

.jm-title {
    height: 18px;
    background: #f3f3f3;
    color: #555;
    display: flex;
    align-items: flex-start;
    padding-left: 8px;
    font-size: 14px;
    letter-spacing: 0;
}

.jm-title-txt {
    margin-left: 10px;
    margin-top: -6px;
    font-size: 14.500px;
    line-height: 20px;
    letter-spacing: -.05px;
}

.jm-ctrl {
    margin-left: auto;
    width: 114px;
    display: flex;
    gap: 33px;
    color: #555;
}

.jm-min {
    width: 11px;
    height: 1px;
    background: #666;
    margin-top: 2px;
}

.jm-max {
    width: 10px;
    height: 6px;
    border: 1px solid #666;
    border-top: 0;
}

.jm-ctrl svg {
    margin-top: -5px;
}

.jm-menu {
    height: 21px;
    display: flex;
    align-items: center;
    font-size: 13.500px;
    letter-spacing: -.4px;
    position: relative;
}

.jm-menu span {
    margin-right: 14.500px;
}

.jm-menu-fill {
    position: absolute;
    left: 760px;
    right: 0;
    bottom: 0;
    height: 1px;
    background: #555;
}

.jm-tools {
    height: 35px;
    display: flex;
    align-items: center;
    border-bottom: 1px solid #2f3132;
    margin-left: -1px;
}

.ti {
    width: 28px;
    height: 24px;
    display: flex;
    align-items: center;
    justify-content: center;
    flex: none;
}

.ti svg {
    width: 21px;
    height: 22px;
}

.tsep {
    width: 1px;
    height: 24px;
    margin: 0 2px;
    background: #55585a;
    flex: none;
}

.stop-word {
    font-size: 7px;
    font-weight: 700;
    fill: #fff;
    font-family: "Liberation Sans", sans-serif;
}

.help-word {
    font-size: 14px;
    fill: #fff;
}

.jm-status {
    margin-left: auto;
    display: flex;
    align-items: center;
    padding-right: 5px;
    font-size: 14px;
}

.st-time {
    margin-right: 7px;
    letter-spacing: -.4px;
}

.st-err {
    color: #e02020;
    margin: 0 8px 0 4px;
}

.st-count {
    margin-right: 5px;
}

.jm-body {
    display: flex;
    height: 906px;
}

.tree {
    width: 372px;
    position: relative;
    padding-top: 1px;
    font-size: 14px;
    border-right: 1px solid #505355;
    flex: none;
}

.tree-line {
    position: absolute;
    top: 22px;
    bottom: 785px;
    width: 1px;
    background: #55585a;
}

.l1 {
    left: 3px;
}

.l2 {
    left: 23px;
    top: 42px;
}

.tn {
    height: 20px;
    display: flex;
    align-items: center;
    position: relative;
}

.tw {
    width: 9px;
    height: 6px;
    margin-right: 8px;
}

.ni {
    width: 15px;
    height: 20px;
    margin-right: 7px;
    flex: none;
}

.n1 {
    padding-left: 20px;
}

.n2 {
    padding-left: 57px;
}

.sel {
    background: #0d293e;
}

.results {
    flex: 1;
    margin-left: 8px;
    padding-top: 11px;
    border-left: 1px solid #505355;
    min-width: 0;
}

.res-title {
    font-size: 17px;
    font-weight: 400;
    letter-spacing: -.6px;
    line-height: 28px;
    padding-left: 10px;
    height: 29px;
}

.frow {
    display: flex;
    align-items: center;
    height: 23px;
    margin-bottom: 8px;
    padding-left: 10px;
    font-size: 13.500px;
}

.flabel {
    width: 69px;
    flex: none;
}

.field {
    width: 1045px;
    height: 23px;
    border: 1px solid #646464;
    background: #45494a;
    padding-left: 3px;
    line-height: 21px;
}

.legend {
    height: 17px;
    margin: -1px 10px 2px 13px;
    position: relative;
    line-height: 16px;
    font-size: 13.500px;
}

.legend:before {
    content: "";
    position: absolute;
    left: 0;
    right: 0;
    top: 7px;
    height: 1px;
    background: #565a5c;
}

.legend span {
    position: relative;
    background: #3c3f41;
    padding: 0 2px;
    margin-left: 3px;
}

.file-row {
    padding-left: 14px;
    margin-bottom: 23px;
    font-size: 13.500px;
}

.file-row .flabel {
    width: 55px;
}

.file {
    width: 643px;
}

.btn {
    border: 1px solid #5e6060;
    border-radius: 2px;
    text-align: center;
    background: #3c3f41;
    box-shadow: 0 1px 0 #333;
}

.browse {
    width: 65px;
    height: 21px;
    line-height: 19px;
    font-size: 11px;
    margin-left: 9px;
}

.log {
    margin-left: 7px;
    width: 105px;
}

.cb {
    width: 14px;
    height: 14px;
    border: 1px solid #6b6b6b;
    border-radius: 2px;
    background: #43494a;
}

.cb-txt {
    margin-left: 5px;
}

.cb + .cb-txt {
    margin-right: 11px;
}

.configure {
    width: 81px;
    height: 23px;
    line-height: 21px;
    margin-left: -2px;
}

.thead {
    display: grid;
    grid-template-columns: repeat(10, 113.100px);
    height: 26px;
    background: #45494a;
    border-top: 1px solid #525557;
    border-bottom: 1px solid #2e3031;
    line-height: 24px;
    text-align: center;
    font-size: 13.500px;
}

.thead span {
    border-right: 1px solid #55585a;
    white-space: nowrap;
}

.rows {
    margin: 1px 0 0 3px;
    border-collapse: collapse;
    table-layout: fixed;
    width: 1129px;
    font-size: 13.500px;
    color: #a9adb0;
}

.rows col {
    width: 112.900px;
}

.rows td {
    height: 20px;
    padding: 0 6px;
    text-align: right;
    border-bottom: 1px solid #4f5355;
    border-right: 1px solid #4f5355;
    white-space: nowrap;
    overflow: hidden;
}

.rows td:last-child {
    border-right: 0;
}

.rows .tl {
    text-align: left;
    padding-left: 5px;
}

.rows .tc {
    text-align: center;
}

.shield {
    width: 13px;
    height: 18px;
    vertical-align: middle;
    display: inline-block;
}

.rows .filler td {
    height: 64px;
    border-bottom: 0;
}

/* ---------- clock ---------- */
.clock {
    position: absolute;
    left: 372px;
    top: 270px;
    width: 727px;
    height: 500px;
    background: #fafafa;
    border-radius: 8px;
    display: flex;
    box-shadow: 0 4px 14px rgba(0, 0, 0, .35);
    color: #1a1a1a;
}

.c-side {
    width: 49px;
    background: #f3f3f3;
    border-right: 1px solid #ececec;
    border-radius: 8px 0 0 8px;
    display: flex;
    flex-direction: column;
    align-items: center;
    padding-top: 10px;
    flex: none;
}

.ci {
    width: 16px;
    height: 16px;
    flex: none;
}

.c1 {
    margin-top: 22px;
}

.c2 {
    margin-top: 24px;
}

.c3 {
    margin-top: 24px;
}

.c-active {
    width: 40px;
    height: 36px;
    margin-top: 16px;
    background: #ececec;
    border-radius: 5px;
    position: relative;
    display: flex;
    align-items: center;
    justify-content: center;
}

.c-bar {
    position: absolute;
    left: 0;
    top: 10px;
    width: 3px;
    height: 16px;
    border-radius: 2px;
    background: #0067c0;
}

.c5 {
    margin-top: 14px;
}

.c-spacer {
    flex: 1;
}

.c-avatar {
    width: 24px;
    height: 24px;
    border-radius: 50%;
    background: #dcdcdc;
    text-align: center;
    font-size: 9.500px;
    line-height: 24px;
    color: #333;
}

.c-gear {
    margin: 22px 0 16px;
}

.c-main {
    flex: 1;
    display: flex;
    flex-direction: column;
    min-width: 0;
}

.c-title {
    height: 36px;
    display: flex;
    align-items: center;
    padding-left: 7px;
}

.c-appicon {
    width: 15px;
    height: 15px;
}

.c-name {
    margin-left: 15px;
    font-size: 13px;
    letter-spacing: -.2px;
}

.c-ctrl {
    margin-left: auto;
    width: 115px;
    display: flex;
    align-items: center;
    color: #999;
}

.c-min {
    width: 11px;
    height: 1px;
    background: #999;
    margin-left: 4px;
}

.c-max {
    width: 10px;
    height: 10px;
    border: 1px solid #888;
    margin-left: 35px;
    border-radius: 1px;
}

.c-x {
    margin-left: 35px;
}

.c-tools {
    height: 16px;
    margin-top: 69px;
    padding-right: 91px;
    display: flex;
    justify-content: flex-end;
    gap: 25px;
}

.c-time {
    height: 100px;
    margin-top: -2px;
    font-size: 112px;
    font-weight: 300;
    line-height: 100px;
    letter-spacing: -1.500px;
    text-align: center;
    white-space: nowrap;
}

.c-frac {
    font-size: 77px;
    letter-spacing: 0;
}

.c-units {
    display: grid;
    grid-template-columns: repeat(3, 145px);
    padding-left: 68px;
    margin-top: 7px;
    height: 30px;
    line-height: 30px;
    font-size: 21px;
    text-align: center;
}

.c-btns {
    display: flex;
    justify-content: center;
    align-items: center;
    gap: 27px;
    margin-top: 37px;
}

.c-pause {
    width: 67px;
    height: 67px;
    border-radius: 50%;
    background: #0067c0;
    display: flex;
    align-items: center;
    justify-content: center;
    gap: 4px;
}

.c-pause span {
    width: 9px;
    height: 22px;
    border-radius: 3px;
    background: #fff;
}

.c-round {
    width: 65px;
    height: 65px;
    border-radius: 50%;
    background: #fff;
    border: 1px solid #ececec;
    border-bottom: 2px solid #d5d5d5;
    display: flex;
    align-items: center;
    justify-content: center;
}

/* ---------- browser ---------- */
.chrome {
    position: absolute;
    left: 1715px;
    top: 0;
    width: 1920px;
    height: 980px;
    background: #fff;
    overflow: hidden;
}

.tabs {
    height: 21px;
    background: #dee1e6;
    display: flex;
    padding-left: 9px;
    position: relative;
}

.tab {
    width: 234.500px;
    height: 21px;
    padding: 0 8px 13px 10px;
    display: flex;
    align-items: center;
    font-size: 14px;
    letter-spacing: -.05px;
    color: #3c4043;
    position: relative;
    flex: none;
}

.tab:after {
    content: "";
    position: absolute;
    right: 0;
    top: 0;
    height: 16px;
    width: 1px;
    background: #9aa0a6;
}

.tab-last:after,
.tab-on:after {
    display: none;
}

.tab-on {
    background: #fff;
    width: 236px;
}

.tab-last {
    border-radius: 0 0 8px 0;
    width: 237px;
}

.tab-after {
    width: 233px;
}

.fav {
    width: 14px;
    height: 14px;
    margin-right: 3px;
    flex: none;
}

.tab-t {
    flex: 1;
    min-width: 0;
    white-space: nowrap;
    overflow: hidden;
}

.tab-x {
    width: 9px;
    height: 9px;
    margin-left: 10px;
    flex: none;
    color: #3c4043;
}

.tab-plus {
    font-size: 24px;
    line-height: 10px;
    margin-left: 14px;
    color: #3c4043;
    font-weight: 300;
}

.win-ctrl {
    position: absolute;
    right: 17px;
    top: 0;
    display: flex;
    align-items: flex-start;
    gap: 36px;
    color: #222;
}

.win-min {
    width: 11px;
    height: 1px;
    background: #222;
    margin-top: 2px;
}

.win-max {
    width: 10px;
    height: 6px;
    border: 1px solid #222;
    border-top: 0;
}

.win-x {
    margin-top: -5px;
}

.toolbar {
    height: 42px;
    display: flex;
    align-items: center;
    padding-left: 15px;
}

.nav-i {
    width: 15px;
    height: 16px;
    margin-right: 17px;
    flex: none;
}

.omni {
    width: 1522px;
    height: 34px;
    margin-left: -4px;
    border-radius: 17px;
    background: #f1f3f4;
    display: flex;
    align-items: center;
    padding-left: 14px;
    color: #5f6368;
    font-size: 14px;
}

.lock {
    width: 9px;
    height: 12px;
    margin-right: 11px;
}

.url {
    flex: 1;
    white-space: nowrap;
    letter-spacing: -.17px;
}

.url b {
    font-weight: 400;
    color: #202124;
}

.om-i {
    width: 16px;
    height: 16px;
    margin-right: 16px;
}

.ext-i {
    width: 15px;
    height: 18px;
    margin-left: 15px;
    margin-right: 2px;
    flex: none;
}

.omni + .ext-i {
    margin-left: 14px;
}

.avatar {
    width: 22px;
    height: 22px;
    margin-left: 11px;
    flex: none;
}

.update {
    width: 82px;
    height: 28px;
    margin-left: 6px;
    border: 1px solid #d93025;
    border-radius: 14px;
    background: #fce8e6;
    color: #d93025;
    font-size: 14px;
    line-height: 26px;
    padding-left: 13px;
    position: relative;
    flex: none;
    letter-spacing: -.2px;
}

.dots {
    position: absolute;
    right: 11px;
    top: 7px;
    display: flex;
    flex-direction: column;
    gap: 3px;
}

.dots i {
    width: 3px;
    height: 3px;
    border-radius: 50%;
    background: #d93025;
}

.marks {
    height: 32px;
    padding-bottom: 4px;
    position: relative;
    font-size: 14px;
    letter-spacing: -.1px;
    color: #3c4043;
    border-bottom: 1px solid #ccc;
    display: flex;
    align-items: center;
    padding-left: 16px;
}

.bm {
    display: inline-flex;
    align-items: center;
    white-space: nowrap;
}

.fd {
    width: 12px;
    height: 14px;
    margin-right: 10px;
    flex: none;
}

.bmi {
    width: 15px;
    height: 15px;
    margin-right: 8px;
    flex: none;
}

.b1 { width: 98px; }
.b2 { width: 107px; }
.b3 { width: 149px; margin-left: -4px; }
.b4 { width: 99px; }
.b5 { width: 67px; }
.b6 { width: 109px; }
.b7 { width: 145px; }
.b8 { width: 97px; }
.b9 { width: 82px; }
.b10 { width: 72px; }
.b11 { width: 63px; }
.b12 { width: 134px; }
.b13 { width: 100px; }

.rsa-word {
    font-size: 5.500px;
    fill: #fff;
    font-weight: 700;
}

.awsnav {
    height: 41px;
    background: #232f3e;
    border-bottom: 2px solid #4a5157;
    display: flex;
    align-items: center;
    color: #fff;
    font-size: 14px;
}

.aws-logo {
    width: 32px;
    margin-left: 19px;
    font-size: 20px;
    line-height: 15px;
    letter-spacing: -.5px;
    text-align: center;
    display: flex;
    flex-direction: column;
    align-items: center;
}

.an-sep {
    width: 1px;
    height: 23px;
    margin-left: 15px;
    background: #414b57;
}

.grid9 {
    width: 15px;
    height: 16px;
    margin-left: 18px;
}

.services {
    margin-left: 9px;
    width: 62px;
    font-weight: 500;
    letter-spacing: -.3px;
}

.searchbox {
    width: 539px;
    height: 30px;
    background: #16191f;
    border: 1px solid #00a1c9;
    border-radius: 2px;
    display: flex;
    align-items: center;
    padding: 0 9px 0 11px;
    color: #95a5a6;
    margin-top: -1px;
}

.search-ph {
    margin-left: 10px;
    font-style: italic;
}

.search-key {
    margin-left: auto;
}

.an-right {
    margin-left: auto;
    display: flex;
    align-items: center;
    padding-right: 18px;
}

.an-item {
    height: 23px;
    display: flex;
    align-items: center;
    justify-content: center;
    width: 50px;
    border-left: 1px solid #414b57;
}

.an-item:first-child {
    border-left: 0;
}

.an-txt {
    width: auto;
    padding: 0 0 0 17px;
    font-size: 13.500px;
    letter-spacing: -.3px;
    font-weight: 500;
    white-space: nowrap;
}

.an-txt + .an-txt {
    margin-left: 16px;
}

.caret {
    display: inline-block;
    margin-left: 6px;
    border-left: 4.500px solid transparent;
    border-right: 4.500px solid transparent;
    border-top: 8px solid #fff;
}

.caret.dark {
    border-top-color: #545b64;
    margin-left: 12px;
}

.console {
    display: flex;
    height: 844px;
    background: #f2f3f3;
    color: #16191f;
    font-size: 14px;
}

.side {
    width: 280px;
    background: #fff;
    border-right: 1px solid #eaeded;
    flex: none;
}

.side-head {
    height: 63px;
    display: flex;
    align-items: center;
    padding-left: 32px;
    border-bottom: 2px solid #eaeded;
}

.side-title {
    font-size: 18px;
    font-weight: 700;
    letter-spacing: -.2px;
}

.side-x {
    margin-left: 144px;
    color: #545b64;
}

.side-sec {
    margin: 0 20px;
    padding-left: 12px;
    border-bottom: 2px solid #eaeded;
}

.s-a {
    height: 97px;
    padding-top: 21px;
}

.s-b {
    height: 71px;
    padding-top: 24px;
}

.s-c {
    border-bottom: 0;
    padding-top: 25px;
}

.side-link {
    display: block;
    height: 22px;
    line-height: 22px;
    color: #545b64;
}

.side-link.on {
    margin-top: 8px;
    color: #0073bb;
    font-weight: 700;
}

.ico {
    vertical-align: -2px;
    color: #545b64;
}

.ico.blue {
    color: #0073bb;
}

.main {
    width: 1600px;
    flex: none;
    min-width: 0;
}

.flash {
    height: 49px;
    background: #037f0c;
    color: #fff;
    border-bottom: 1px solid #d5dbdb;
    display: flex;
    align-items: center;
    padding-left: 12px;
}

.flash-txt {
    margin-left: 8px;
    font-weight: 500;
    letter-spacing: -.05px;
}

.flash-btn {
    margin-left: auto;
    width: 155px;
    height: 30px;
    background: #fff;
    color: #545b64;
    border: 1px solid #545b64;
    line-height: 28px;
    text-align: center;
    font-weight: 700;
    letter-spacing: .1px;
}

.flash-x {
    margin: 0 18px 0 18px;
}

.content {
    padding: 0 40px;
}

.crumbs {
    display: flex;
    align-items: center;
    height: 22px;
    margin-top: 20px;
    gap: 12px;
    color: #545b64;
}

.crumbs a {
    color: #0073bb;
    text-decoration: underline;
}

.crumbs span {
    font-weight: 500;
}

.pagehead {
    display: flex;
    align-items: center;
    height: 34px;
    margin-top: 23px;
}

.pagehead h1 {
    font-size: 27px;
    font-weight: 400;
    letter-spacing: -.75px;
    white-space: nowrap;
    margin-top: -3px;
}

.info {
    margin-left: 9px;
    font-size: 12px;
    font-weight: 700;
    color: #0073bb;
    margin-top: 7px;
}

.updated {
    margin-left: 12px;
    font-size: 14.300px;
    color: #545b64;
    margin-top: 5px;
}

.acts {
    margin-left: auto;
    display: flex;
    gap: 8px;
}

.abtn {
    height: 32px;
    border: 1px solid #545b64;
    border-radius: 2px;
    background: #fff;
    color: #545b64;
    font-weight: 700;
    display: flex;
    align-items: center;
    justify-content: center;
    gap: 6px;
}

.refresh {
    width: 113px;
}

.actions {
    width: 113px;
    gap: 0;
}

.stop {
    width: 155px;
    background: #ff9900;
    border-color: #ff9900;
    color: #16191f;
    letter-spacing: .1px;
}

.card {
    background: #fff;
    border-top: 1px solid #eaeded;
    border-bottom: 2px solid #879596;
    box-shadow: 0 0 1px rgba(0, 28, 36, .3);
}

.details {
    margin-top: 24px;
    height: 279px;
}

.card-head {
    height: 63px;
    background: #fafafa;
    border-bottom: 1px solid #eaeded;
    padding-left: 21px;
    display: flex;
    flex-direction: column;
    justify-content: center;
}

.card-head h2 {
    font-size: 18px;
    font-weight: 700;
    letter-spacing: -.1px;
}

.dgrid {
    display: grid;
    grid-template-columns: 361px 380px 380px 1fr;
    padding: 16px 0 0 20px;
}

.dcol {
    height: 178px;
    padding-left: 20px;
    border-left: 1px solid #eaeded;
}

.dcol:first-child {
    padding-left: 0;
    border-left: 0;
}

.dt {
    height: 22px;
    line-height: 22px;
    color: #545b64;
}

.dd {
    height: 22px;
    line-height: 22px;
    margin: 2px 0 20px;
    white-space: nowrap;
}

.copy {
    width: 14px;
    height: 16px;
    margin: 0 6px 0 5px;
    vertical-align: -3px;
}

.state {
    display: inline-block;
    color: #545b64;
    border-bottom: 1px dashed #16191f;
    height: 22px;
}

.state .ico {
    margin-right: 5px;
}

.lnk {
    color: #0073bb;
    text-decoration: underline;
}

.blue {
    color: #0073bb;
}

.ctabs {
    margin-top: 28px;
    height: 44px;
    border-bottom: 2px solid #aab7b8;
    display: flex;
    align-items: flex-start;
}

.ctab {
    height: 30px;
    line-height: 30px;
    padding: 0 20px;
    border-left: 1px solid #aab7b8;
    color: #545b64;
    font-weight: 500;
    letter-spacing: .1px;
    position: relative;
}

.ctab:first-child {
    border-left: 0;
    padding-left: 21px;
}

.ctab.on {
    color: #0073bb;
    font-weight: 700;
}

.ctab.on:after {
    content: "";
    position: absolute;
    left: 0;
    right: 0;
    top: 41px;
    height: 3px;
    background: #16191f;
}

.acard {
    margin-top: 17px;
    height: 208px;
}

.ahead {
    height: 81px;
    padding-top: 3px;
}

.ahead h2 {
    line-height: 24px;
}

.cnt {
    font-weight: 400;
    color: #687078;
}

.ahead p {
    font-size: 12.300px;
    color: #545b64;
    line-height: 18px;
    margin-top: 4px;
}

.abody {
    padding: 17px 20px 0;
}

.item {
    height: 89px;
    background: #fafafa;
    border-top: 1px solid #eaeded;
    border-bottom: 2px solid #879596;
    box-shadow: 0 0 1px rgba(0, 28, 36, .3);
    padding: 19px 20px 0 21px;
}

.item-top {
    display: flex;
    align-items: center;
    gap: 12px;
    height: 22px;
}

.item-name {
    font-size: 18px;
}

.pending {
    margin-left: auto;
    color: #687078;
    font-size: 14px;
}

.pending .ico {
    margin-right: 5px;
    color: #687078;
}

.item-sub {
    margin: 11px 0 0 20px;
    font-size: 12.300px;
    color: #545b64;
}

.rail {
    flex: 1;
    background: #fff;
    border-left: 1px solid #d5dbdb;
    display: flex;
    justify-content: center;
    padding-top: 10px;
}

.q-word {
    font-size: 12px;
    fill: #fff;
    font-weight: 700;
}
```
